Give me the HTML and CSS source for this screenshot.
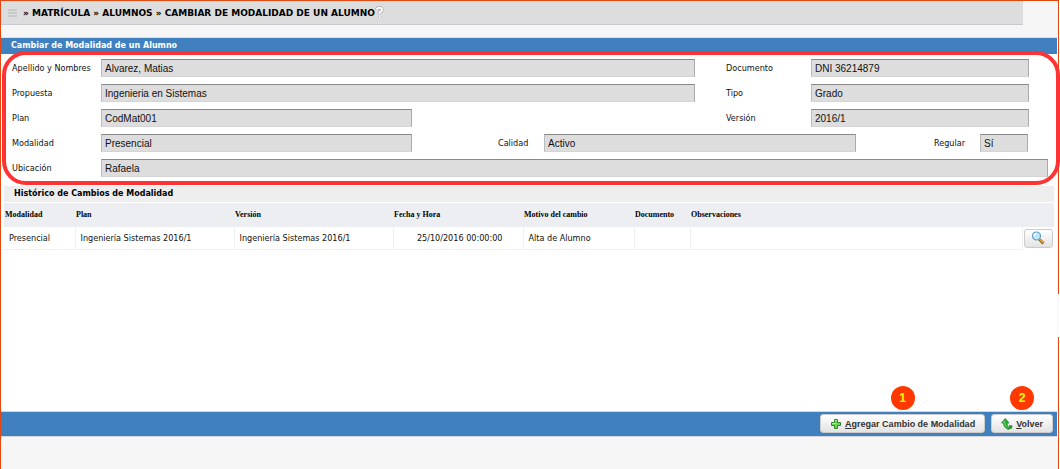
FILE: index.html
```html
<!DOCTYPE html>
<html lang="es">
<head>
<meta charset="utf-8">
<title>Cambiar de Modalidad de un Alumno</title>
<link rel="stylesheet" href="styles.css">
</head>
<body>
<div class="page">
  <header class="top">
    <nav class="crumbs">
      <svg class="menu-icon" width="9" height="8" viewBox="0 0 9 8" aria-hidden="true"><path d="M0 1h9M0 4h9M0 7h9" stroke="#b4b4b4" stroke-width="1"/></svg>
      <h1 class="crumbs-text">» MATRÍCULA » ALUMNOS » CAMBIAR DE MODALIDAD DE UN ALUMNO</h1>
      <svg class="help-icon" width="9" height="13" viewBox="0 0 9 13" aria-hidden="true"><path d="M1.800 3.500Q2 1.800 4.500 1.800 7 1.800 7 4 7 5.300 4.600 6.500V8.300M4.600 10v2" fill="none" stroke="#999" stroke-width="3.200"/><path d="M1.800 3.500Q2 1.800 4.500 1.800 7 1.800 7 4 7 5.300 4.600 6.500V8.300M4.600 10v2" fill="none" stroke="#fff" stroke-width="2"/></svg>
    </nav>
  </header>
  <main class="main">
    <h2 class="title">Cambiar de Modalidad de un Alumno</h2>
    <form class="data">
      <div class="row row-pair">
        <label for="nombre">Apellido y Nombres</label><input class="wide" id="nombre" value="Alvarez, Matias" readonly>
        <label class="second" for="doc">Documento</label><input id="doc" value="DNI 36214879" readonly>
      </div>
      <div class="row row-pair">
        <label for="propuesta">Propuesta</label><input class="wide" id="propuesta" value="Ingenieria en Sistemas" readonly>
        <label class="second" for="tipo">Tipo</label><input id="tipo" value="Grado" readonly>
      </div>
      <div class="row row-pair">
        <label for="plan">Plan</label><input id="plan" value="CodMat001" readonly>
        <label class="second" for="version">Versión</label><input id="version" value="2016/1" readonly>
      </div>
      <div class="row row-triple">
        <label for="modalidad">Modalidad</label><input id="modalidad" value="Presencial" readonly>
        <label class="calidad" for="calidad">Calidad</label><input id="calidad" value="Activo" readonly>
        <label class="regular" for="regular">Regular</label><input id="regular" value="Sí" readonly>
      </div>
      <div class="row row-single">
        <label for="ubicacion">Ubicación</label><input id="ubicacion" value="Rafaela" readonly>
      </div>
      <div class="highlight"></div>
    </form>
    <section class="history">
      <h3 class="subtitle">Histórico de Cambios de Modalidad</h3>
      <table class="grid">
        <colgroup><col class="c-mod"><col class="c-plan"><col class="c-plan"><col class="c-date"><col class="c-reason"><col class="c-doc"><col><col class="c-action"></colgroup>
        <thead><tr><th>Modalidad</th><th>Plan</th><th>Versión</th><th>Fecha y Hora</th><th>Motivo del cambio</th><th>Documento</th><th>Observaciones</th><th></th></tr></thead>
        <tbody><tr>
          <td>Presencial</td><td>Ingeniería Sistemas 2016/1</td><td>Ingeniería Sistemas 2016/1</td><td class="date">25/10/2016 00:00:00</td><td>Alta de Alumno</td><td></td><td></td>
          <td class="action"><button class="btn btn-icon" type="button" aria-label="Ver detalle"><svg width="14" height="14" viewBox="0 0 14 14" aria-hidden="true"><path d="M8.500 8.500l4 4" stroke="#8a5a20" stroke-width="3"/><path d="M9 8.500l3.500 3.500" stroke="#f0a830" stroke-width="1.500"/><circle cx="5.500" cy="5" r="4" fill="#bfe8fa" stroke="#5b9fc9" stroke-width="1.200"/><path d="M3 5q0-2.500 2.500-2.500" fill="none" stroke="#fff" stroke-width="1.300"/></svg></button></td>
        </tr></tbody>
      </table>
    </section>
  </main>
  <footer class="actions">
    <div class="action-item">
      <span class="badge">1</span>
      <button class="btn" type="button"><svg width="12" height="12" viewBox="0 0 12 12" aria-hidden="true"><path d="M4.500 1.500h3v3h3v3h-3v3h-3v-3h-3v-3h3z" fill="#6fd05a" stroke="#2a8a2a"/><path d="M5 2.500h2M2 5.500h4" fill="none" stroke="#b4eca4"/></svg><span><u>A</u>gregar Cambio de Modalidad</span></button>
    </div>
    <div class="action-item">
      <span class="badge">2</span>
      <button class="btn" type="button"><svg width="12" height="12" viewBox="0 0 12 12" aria-hidden="true"><path d="M4.300.5L.5 5h2q0 4.500 5 6.500L8 9.500Q5.800 8 6 5h2z" fill="#2faa35" stroke="#167a20" stroke-width=".7"/><path d="M8 7l3.500.5-.5 3-3.500 1L8 9.500z" fill="#2a9a2e"/><path d="M4 2.500L2.500 4.500h1.300q0 3 2 4.800" fill="none" stroke="#74d66a"/></svg><span><u>V</u>olver</span></button>
    </div>
  </footer>
  <div class="border-gap"></div>
</div>
</body>
</html>
```
FILE: styles.css
```css
* { box-sizing: border-box; }
body { margin: 0; background: #fff; color: #111; font: 9px/12px "DejaVu Sans Condensed", "DejaVu Sans", sans-serif; }
h1, h2, h3 { margin: 0; }
.page { position: relative; display: flex; flex-direction: column; min-height: 100vh; margin-right: 1px; padding-bottom: 32px; background: #f6f6f6; border: 1px solid #e2480f; border-bottom: 0; }
.top { padding: 0 35px 12px 0; border-bottom: 1px solid #e2e2e2; }
.crumbs { display: flex; align-items: center; height: 24px; padding-left: 7px; background: #ddd; border-bottom: 1px solid #c8c8d2; }
.crumbs-text { margin: 0 0 0 6px; font: bold 9px/12px "DejaVu Sans", sans-serif; color: #000; }
.main { flex: 1; margin-right: 1px; background: #fff; }
.title { height: 16px; padding-left: 10px; background: #4080bf; color: #fff; font: bold 8px/16px "DejaVu Sans", sans-serif; }

.data { position: relative; display: grid; gap: 7px; padding: 5px 9px 7px 11px; }
.row { display: grid; align-items: center; height: 18px; }
.row-pair { grid-template-columns: 89px 311fr 283fr 31px 85px 218fr 19px; }
.row-pair .wide { grid-column: 2 / 4; }
.row-pair .second { grid-column: 5; }
.row-triple { grid-template-columns: 89px 311fr 86fr 46px 312fr 78fr 46px 48px 20px; }
.row-triple .calidad { grid-column: 4; }
.row-triple .regular { grid-column: 7; }
.row-single { grid-template-columns: 89px 1fr; }
.row input { width: 100%; min-width: 0; height: 18px; padding: 0 3px; border: 1px solid #d4d4d4; border-top-color: #888; border-left-color: #bbb; border-right-color: #aaa; border-radius: 0; background: #ddd; color: #111; font: 10px/14px "Liberation Sans", Arial, sans-serif; }
.highlight { position: absolute; inset: -3px -3px -1px 1px; border: 4px solid #f33; border-radius: 24px; pointer-events: none; }

.history { padding: 2px 3px 0; }
.subtitle { height: 16px; margin-bottom: 1px; padding-left: 10px; background: #eee; color: #000; font: bold 8px/16px "DejaVu Sans", sans-serif; }
.grid { width: 100%; table-layout: fixed; border-collapse: collapse; }
.grid th { height: 24px; padding: 0 1px; background: #edeef2; color: #000; font: bold 8px/12px "Liberation Serif", serif; text-align: left; white-space: nowrap; }
.grid td { height: 22px; padding: 0 5px; border-right: 1px solid #f0f0f0; border-bottom: 1px solid #f0f0f0; white-space: nowrap; }
.grid .date { text-align: right; padding-right: 20px; }
.grid .action { padding: 0 1px; border: 0; }
.c-mod { width: 71px; }
.c-plan { width: 159px; }
.c-date { width: 130px; }
.c-reason { width: 111px; }
.c-doc { width: 56px; }
.c-action { width: 32px; }

.btn { display: flex; align-items: center; justify-content: center; gap: 3px; height: 19px; padding: 0 9px; border: 1px solid #ccc; border-radius: 3px; background: linear-gradient(#fff, #e3e3e3); color: #333; font: bold 9px/12px "Liberation Sans", Arial, sans-serif; white-space: nowrap; }
.btn-icon { width: 100%; padding: 0; }
.actions { display: flex; justify-content: flex-end; align-items: flex-start; gap: 6px; height: 26px; margin-right: 1px; padding: 2px 4px; background: #4080bf; border-top: 1px solid #d0d8e0; border-bottom: 1px solid #d5d5da; }
.action-item { position: relative; }
.badge { position: absolute; bottom: 23px; left: calc(50% - 12px); width: 24px; height: 24px; border-radius: 50%; background: #ff3800; color: #ff0; font: bold 12px/24px "Liberation Sans", Arial, sans-serif; text-align: center; }
.border-gap { position: absolute; top: 293px; right: -1px; width: 1px; height: 43px; background: #fff; }
```
